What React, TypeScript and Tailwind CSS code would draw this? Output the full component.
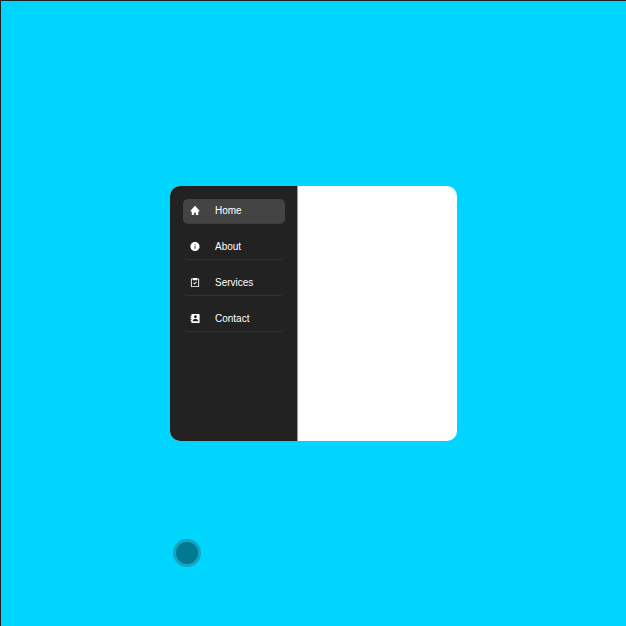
import { BiSolidContact, BiSolidHome, BiSolidInfoCircle, BiTask } from "react-icons/bi";

const links = [
  { label: "Home", Icon: BiSolidHome, active: true },
  { label: "About", Icon: BiSolidInfoCircle, active: false },
  { label: "Services", Icon: BiTask, active: false },
  { label: "Contact", Icon: BiSolidContact, active: false },
];

export default function App() {
  return (
    <div className="relative flex min-h-screen items-center justify-center border-l border-t border-[#222222] bg-[#00d5ff] font-['Liberation_Sans',Arial,sans-serif]">
      <main className="flex h-[255px] w-[287px] overflow-hidden rounded-[10px] bg-white">
        <nav className="w-32 border-r border-[#999999] bg-[#222222] px-[13px] pt-[13px]">
          <ul className="flex w-[102px] flex-col gap-[11px]">
            {links.map(({ label, Icon, active }) => (
              <li key={label}>
                <a
                  href="#"
                  aria-current={active ? "page" : undefined}
                  className={`flex h-[25px] items-center gap-[14px] rounded-[5px] border-b pl-[6px] text-[10px] leading-3 text-white ${
                    active ? "border-[#3c3c3c] bg-[#444444]" : "border-[#333333]"
                  }`}
                >
                  <Icon className="size-3 pb-px" aria-hidden="true" />
                  {label}
                </a>
              </li>
            ))}
          </ul>
        </nav>
      </main>
      <div className="absolute left-[172px] top-[538px] size-7 rounded-full border-[3px] border-[#16a4c0] bg-[#007991]" />
    </div>
  );
}
